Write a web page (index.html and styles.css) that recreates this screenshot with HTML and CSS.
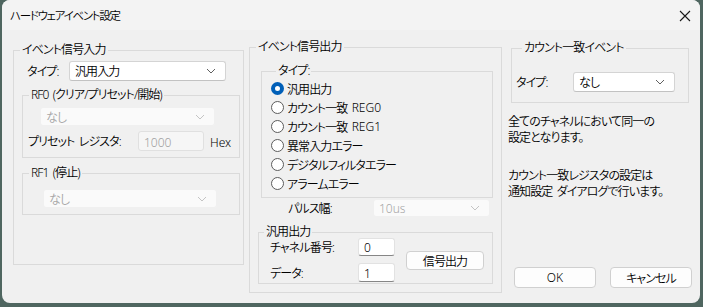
FILE: index.html
```html
<!DOCTYPE html>
<html lang="ja">
<head>
  <meta charset="UTF-8" />
  <title>ハードウェアイベント設定</title>
  <link rel="stylesheet" href="styles.css">
</head>
<body>
  <div class="window">
    <!-- Title bar -->
    <div class="titlebar">
      <span class="title">ハードウェアイベント設定</span>
      <svg class="close" width="12" height="12" viewBox="0 0 12 12"><path d="M1 1L11 11M11 1L1 11" stroke="#1a1a1a" stroke-width="1.1" fill="none"/></svg>
    </div>

    <div class="content">
      <!-- Input -->
      <fieldset class="group group-in">
        <legend>イベント信号入力</legend>
        <div class="row type-row">
          <span class="lbl lbl-type">タイプ:</span>
          <div class="combo combo-in"><span>汎用入力</span><svg class="chev" width="10" height="6" viewBox="0 0 10 6"><path d="M1 1L5 5L9 1" stroke="#606060" fill="none"/></svg></div>
        </div>
        <fieldset class="group rf0">
          <legend>RF0 (クリア/プリセット/開始)</legend>
          <div class="combo disabled combo-rf0"><span>なし</span><svg class="chev" width="10" height="6" viewBox="0 0 10 6"><path d="M1 1L5 5L9 1" stroke="#c4c4c4" fill="none"/></svg></div>
          <div class="row preset-row">
            <span class="lbl lbl-preset">プリセット レジスタ:</span>
            <div class="edit disabled edit-preset latin">1000</div>
            <span class="hex latin">Hex</span>
          </div>
        </fieldset>
        <fieldset class="group rf1">
          <legend>RF1 (停止)</legend>
          <div class="combo disabled combo-rf1"><span>なし</span><svg class="chev" width="10" height="6" viewBox="0 0 10 6"><path d="M1 1L5 5L9 1" stroke="#c4c4c4" fill="none"/></svg></div>
        </fieldset>
      </fieldset>

      <!-- Output -->
      <fieldset class="group group-out">
        <legend>イベント信号出力</legend>
        <fieldset class="group types">
          <legend>タイプ:</legend>
          <label class="radio-row"><span class="radio checked"></span>汎用出力</label>
          <label class="radio-row"><span class="radio"></span>カウント一致 <span class="latin">REG0</span></label>
          <label class="radio-row"><span class="radio"></span>カウント一致 <span class="latin">REG1</span></label>
          <label class="radio-row"><span class="radio"></span>異常入力エラー</label>
          <label class="radio-row"><span class="radio"></span>デジタルフィルタエラー</label>
          <label class="radio-row"><span class="radio"></span>アラームエラー</label>
        </fieldset>
        <div class="row pulse-row">
          <span class="lbl lbl-pulse">パルス幅:</span>
          <div class="combo disabled combo-pulse"><span class="latin">10us</span><svg class="chev" width="10" height="6" viewBox="0 0 10 6"><path d="M1 1L5 5L9 1" stroke="#c4c4c4" fill="none"/></svg></div>
        </div>
        <fieldset class="group gp-out">
          <legend>汎用出力</legend>
          <div class="gp-grid">
            <span class="lbl">チャネル番号:</span>
            <div class="edit edit-ch latin">0</div>
            <button class="btn btn-signal">信号出力</button>
            <span class="lbl">データ:</span>
            <div class="edit edit-data latin">1</div>
          </div>
        </fieldset>
      </fieldset>

      <!-- Count match -->
      <div class="side">
        <fieldset class="group match">
          <legend>カウント一致イベント</legend>
          <div class="row">
            <span class="lbl lbl-match">タイプ:</span>
            <div class="combo combo-match"><span>なし</span><svg class="chev" width="10" height="6" viewBox="0 0 10 6"><path d="M1 1L5 5L9 1" stroke="#606060" fill="none"/></svg></div>
          </div>
        </fieldset>
        <p class="note note-1">全てのチャネルにおいて同一の<br>設定となります。</p>
        <p class="note note-2">カウント一致レジスタの設定は<br>通知設定 ダイアログで行います。</p>
        <div class="actions">
          <button class="btn btn-dlg latin">OK</button>
          <button class="btn btn-dlg">キャンセル</button>
        </div>
      </div>
    </div>
  </div>
</body>
</html>
```

FILE: styles.css
```css
/* BASE */
* { box-sizing: border-box; }
body {
  margin: 0;
  background: #4f6660;
  font-family: "Noto Sans", "Noto Sans CJK JP", sans-serif;
  font-size: 12px;
  font-weight: 350;
  font-feature-settings: "palt";
  letter-spacing: -0.9px;
  word-spacing: 2px;
  color: #000;
  width: 703px;
  height: 307px;
  overflow: hidden;
}
.latin { letter-spacing: 0; }

/* WINDOW */
.window {
  width: 698px;
  height: 303px;
  margin-left: 2px;
  background: #f0f0f0;
  border-radius: 8px;
  overflow: hidden;
}
.titlebar {
  height: 30px;
  display: flex;
  align-items: center;
  justify-content: space-between;
  padding: 0 9px 0 8px;
  background: #f3f3f3;
}
.title { font-size: 11.5px; letter-spacing: -1.3px; }
.close { margin-top: 1px; }

.content {
  display: flex;
  align-items: flex-start;
  padding: 0 0 0 11px;
}

/* GROUP BOXES */
.group {
  border: 1px solid #dadada;
  margin: 0;
  padding: 0;
  min-width: 0;
}
.group legend {
  padding: 0 2px;
  margin-left: 6px;
  line-height: 16px;
}
.lbl { white-space: nowrap; }
.row { display: flex; align-items: center; }

/* COMBOS & EDITS */
.combo {
  display: flex;
  align-items: center;
  justify-content: space-between;
  height: 20px;
  padding: 0 9px 0 5px;
  background: #fff;
  border: 1px solid #d4d4d4;
  border-bottom-color: #c2c2c2;
  border-radius: 3px;
}
.combo.disabled {
  background: #fafafa;
  border-color: #f0f0f0;
  color: #a6a6a6;
}
.edit {
  height: 19px;
  padding: 1px 0 0 5px;
  background: #fff;
  border: 1px solid #e2e2e2;
  border-bottom: 1px solid #868686;
  border-radius: 3px;
}
.edit.disabled {
  background: #f6f6f6;
  border-color: #e0e0e0;
  color: #a0a0a0;
}
.btn {
  font: inherit;
  letter-spacing: inherit;
  background: #fdfdfd;
  border: 1px solid #d0d0d0;
  border-radius: 4px;
  padding: 0;
  color: #000;
}
.btn.latin { letter-spacing: 0; }

/* LEFT: INPUT */
.group-in {
  width: 231px;
  height: 223px;
  margin-top: 12px;
}
.type-row { margin-top: 3px; padding-left: 13px; }
.lbl-type { width: 42px; }
.combo-in { width: 157px; }

.rf0 {
  width: 218px;
  margin: 6px 0 0 8px;
  padding-bottom: 6px;
}
.combo-rf0 { width: 175px; height: 19px; margin: 4px 0 0 17px; }
.preset-row { margin-top: 5px; padding-left: 5px; }
.lbl-preset { width: 110px; }
.edit-preset { width: 66px; height: 20px; padding-top: 2px; }
.hex { margin: 2px 0 0 6px; }

.rf1 {
  width: 218px;
  margin: 7px 0 0 8px;
  padding-bottom: 6px;
}
.combo-rf1 { width: 174px; height: 19px; margin: 8px 0 0 20px; }

/* MIDDLE: OUTPUT */
.group-out {
  width: 253px;
  height: 254px;
  margin: 9px 0 0 5px;
}
.types {
  width: 232px;
  margin: 8px 0 0 11px;
  padding: 0 0 4px 9px;
}
.types legend { margin-left: 5px; }
.radio-row {
  display: flex;
  align-items: center;
  height: 19px;
  white-space: pre;
}
.radio {
  width: 13px;
  height: 13px;
  margin-right: 3px;
  border: 1px solid #5c5c5c;
  border-radius: 50%;
  background: #fff;
}
.radio.checked {
  border: 4px solid #005fb8;
  background: #fff;
}

.pulse-row { margin-top: 1px; padding-left: 38px; }
.lbl-pulse { width: 85px; }
.combo-pulse { width: 117px; height: 18px; }

.gp-out {
  width: 235px;
  margin: 7px 0 0 8px;
  padding-bottom: 1px;
}
.gp-out legend { margin-left: 5px; }
.gp-grid {
  display: grid;
  grid-template-columns: 77px 37px 78px;
  grid-template-rows: 18px 19px;
  row-gap: 7px;
  column-gap: 11px;
  align-items: center;
  margin-top: -2px;
  padding-left: 11px;
}
.edit-ch { height: 18px; padding-top: 0; }
.btn-signal {
  grid-column: 3;
  grid-row: 1 / 3;
  height: 19px;
  align-self: center;
}

/* RIGHT */
.side {
  width: 184px;
  margin-left: 6px;
  display: flex;
  flex-direction: column;
}
.match {
  width: 178px;
  margin: 10px 0 0 3px;
  padding: 0 0 10px 4px;
}
.match .row { margin-top: 16px; }
.lbl-match { width: 57px; }
.combo-match { width: 102px; }
.note {
  margin: 0;
  line-height: 16px;
  white-space: nowrap;
}
.note-1 { margin-top: 11px; }
.note-2 { margin-top: 22px; }
.actions {
  display: flex;
  justify-content: space-between;
  margin: 67px 0 0 6px;
}
.btn-dlg { width: 82px; height: 21px; }
```
